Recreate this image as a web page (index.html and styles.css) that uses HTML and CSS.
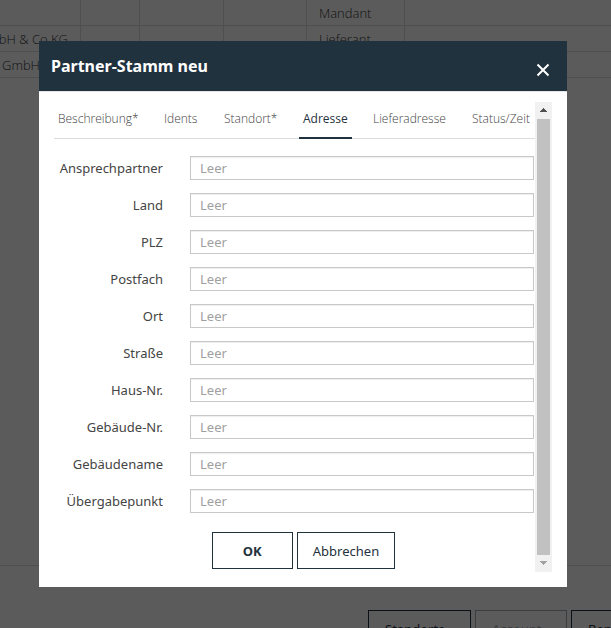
FILE: index.html
```html
<!DOCTYPE html>
<html lang="de">
<head>
<meta charset="utf-8">
<title>Partner-Stamm neu</title>
<link rel="stylesheet" href="styles.css">
</head>
<body>
<div class="page">
  <table class="partners">
    <colgroup><col class="c-name"><col class="c-a"><col class="c-b"><col class="c-c"><col class="c-role"><col></colgroup>
    <tbody>
      <tr><td></td><td></td><td></td><td></td><td>Mandant</td><td></td></tr>
      <tr><td class="tail"><span>mbH &amp; Co KG</span></td><td></td><td></td><td></td><td>Lieferant</td><td></td></tr>
      <tr><td class="lead">GmbH</td><td></td><td></td><td></td><td></td><td></td></tr>
    </tbody>
  </table>
  <footer class="page-actions">
    <button type="button" class="page-btn wide">Standorte...</button>
    <button type="button" class="page-btn" disabled>Account...</button>
    <button type="button" class="page-btn">Benutzer...</button>
  </footer>
</div>

<div class="overlay">
  <section class="dialog" role="dialog" aria-labelledby="dialog-title">
    <header class="dialog-head">
      <h1 id="dialog-title">Partner-Stamm neu</h1>
      <button type="button" class="close" aria-label="Schließen">
        <svg width="14" height="14" viewBox="0 0 14 14"><path d="M1.5 1.5l11 11M12.5 1.5l-11 11" stroke="currentColor" stroke-width="2" fill="none"/></svg>
      </button>
    </header>
    <div class="dialog-body">
      <form class="content">
        <nav class="tabs">
          <a href="#">Beschreibung*</a>
          <a href="#">Idents</a>
          <a href="#">Standort*</a>
          <a href="#" class="active">Adresse</a>
          <a href="#">Lieferadresse</a>
          <a href="#">Status/Zeit</a>
        </nav>
        <div class="fields">
          <label for="f1">Ansprechpartner</label><input id="f1" type="text" placeholder="Leer">
          <label for="f2">Land</label><input id="f2" type="text" placeholder="Leer">
          <label for="f3">PLZ</label><input id="f3" type="text" placeholder="Leer">
          <label for="f4">Postfach</label><input id="f4" type="text" placeholder="Leer">
          <label for="f5">Ort</label><input id="f5" type="text" placeholder="Leer">
          <label for="f6">Straße</label><input id="f6" type="text" placeholder="Leer">
          <label for="f7">Haus-Nr.</label><input id="f7" type="text" placeholder="Leer">
          <label for="f8">Gebäude-Nr.</label><input id="f8" type="text" placeholder="Leer">
          <label for="f9">Gebäudename</label><input id="f9" type="text" placeholder="Leer">
          <label for="f10">Übergabepunkt</label><input id="f10" type="text" placeholder="Leer">
        </div>
        <div class="buttons">
          <button type="button" class="btn primary">OK</button>
          <button type="button" class="btn">Abbrechen</button>
        </div>
      </form>
      <div class="scrollbar" aria-hidden="true">
        <svg class="arrow up" width="17" height="17" viewBox="0 0 17 17" shape-rendering="crispEdges"><path d="M8 6h1v1h1v1h1v1h1v1H5V9h1V8h1V7h1z"/></svg>
        <div class="thumb"></div>
        <svg class="arrow down" width="17" height="17" viewBox="0 0 17 17" shape-rendering="crispEdges"><path d="M8 10h1V9h1V8h1V7h1V6H5v1h1v1h1v1h1z"/></svg>
      </div>
    </div>
  </section>
</div>
</body>
</html>
```
FILE: styles.css
```css
* { box-sizing: border-box; }
html, body { height: 100%; }
body {
  margin: 0;
  overflow: hidden;
  background: #fff;
  color: #444;
  font: 13px/20px "Noto Sans", "Open Sans", sans-serif;
}
button, input { font: inherit; }

.page {
  display: flex;
  flex-direction: column;
  justify-content: space-between;
  height: 100%;
  overflow: hidden;
}
.partners {
  width: 100%;
  table-layout: fixed;
  border-collapse: separate;
  border-spacing: 0;
  font: 300 13px/20px "Open Sans", "Noto Sans", sans-serif;
  color: #333;
}
.partners td {
  height: 26px;
  padding: 0 12px;
  border-bottom: 1px solid #ddd;
  border-right: 1px solid #ddd;
  white-space: nowrap;
  overflow: hidden;
}
.partners td:last-child { border-right: 0; }
.partners .tail span { display: flex; justify-content: flex-end; }
.partners .tail { padding-left: 0; }
.partners .lead { padding-left: 2px; }
.c-name { width: 81px; }
.c-a { width: 59px; }
.c-b { width: 84px; }
.c-c { width: 83px; }
.c-role { width: 98px; }

.page-actions {
  display: flex;
  flex: none;
  justify-content: flex-start;
  gap: 4px;
  height: 63px;
  padding: 44px 0 0 368px;
  border-top: 1px solid #ddd;
}
.page-btn {
  flex: none;
  width: 92px;
  height: 37px;
  padding: 0 16px;
  border: 1px solid #1f323e;
  background: none;
  color: #1f323e;
  text-align: left;
}
.page-btn.wide { width: 103px; }
.page-btn:disabled { border-color: #a5afb4; color: #a5afb4; }

.overlay {
  position: fixed;
  inset: 0;
  padding: 41px 44px 41px 39px;
  background: rgba(0, 0, 0, 0.645);
}
.dialog { background: #fff; }
.dialog-head {
  display: flex;
  align-items: center;
  justify-content: space-between;
  height: 50px;
  padding: 0 17px 0 12px;
  background: #1f323e;
  color: #fff;
}
.dialog-head h1 { margin: 0; font-size: 16px; font-weight: 700; }
.close {
  display: flex;
  margin-top: 8px;
  padding: 0;
  border: 0;
  background: none;
  color: #fff;
}
.dialog-body {
  display: flex;
  padding: 10px 15px 15px;
  border-top: 1px solid #e5e5e5;
}
.content { flex: 1; min-width: 0; }

.tabs {
  display: grid;
  grid-template-columns: 106fr 60fr 79fr 70fr 99fr 67fr;
  justify-items: start;
  height: 37px;
  border-bottom: 1px solid #ddd;
}
.tabs a {
  height: 37px;
  padding: 0 4px;
  border-bottom: 2px solid transparent;
  color: #444;
  font-family: "Open Sans", "Noto Sans", sans-serif;
  font-size: 12px;
  font-weight: 300;
  line-height: 34px;
  text-decoration: none;
  white-space: nowrap;
}
.tabs .active { border-color: #1f323e; color: #1f323e; font-weight: 400; }

.fields {
  display: grid;
  grid-template-columns: 109px 1fr;
  column-gap: 27px;
  row-gap: 13px;
  align-items: center;
  padding: 17px 1px 0 0;
}
.fields label { line-height: 24px; text-align: right; white-space: nowrap; }
.fields input {
  width: 100%;
  height: 24px;
  padding: 0 9px;
  border: 1px solid #c8c8c8;
  border-radius: 0;
  background: #fff;
  box-shadow: inset 0 1px 1px rgba(0, 0, 0, 0.07);
  color: #444;
  outline: 0;
}
.fields input::placeholder { color: #a0a0a0; opacity: 1; }

.buttons {
  display: flex;
  justify-content: center;
  gap: 4px;
  padding: 19px 0 3px 18px;
}
.buttons .btn {
  min-width: 81px;
  height: 37px;
  padding: 0 15px;
  border: 1px solid #1f323e;
  background: #fff;
  color: #1f323e;
}
.buttons .primary { font-weight: 700; }

.scrollbar {
  display: flex;
  flex-direction: column;
  width: 17px;
  background: #f1f1f1;
}
.thumb { flex: 1; margin: 0 2px; background: #c1c1c1; }
.arrow { display: block; }
.up { fill: #505050; }
.down { fill: #a3a3a3; }
```
